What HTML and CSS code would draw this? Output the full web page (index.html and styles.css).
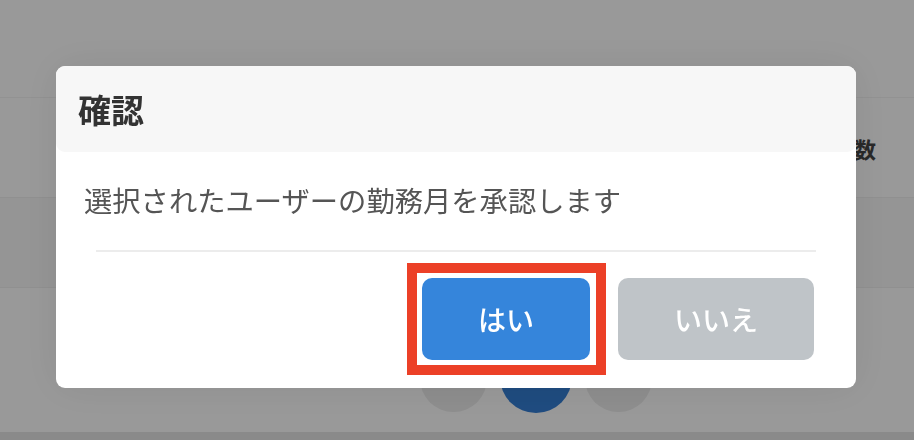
FILE: index.html
```html
<!DOCTYPE html>
<html lang="ja">
<head>
    <meta charset="UTF-8">
    <meta name="viewport" content="width=device-width, initial-scale=1.0">
    <title>確認</title>
    <link rel="stylesheet" href="styles.css">
</head>
<body>
    <div class="page">
        <div class="page-top"></div>

        <div class="list">
            <div class="list-row list-head">
                <span class="list-cell">勤務日数</span>
            </div>
            <div class="list-row list-odd"></div>
        </div>

        <div class="pager">
            <span class="pager-dot"></span>
            <span class="pager-dot current"></span>
            <span class="pager-dot"></span>
        </div>

        <div class="page-foot"></div>
    </div>

    <div class="overlay">
        <div class="modal">
            <div class="modal-head">
                <h2>確認</h2>
            </div>

            <p class="modal-body">選択されたユーザーの勤務月を承認します</p>

            <div class="modal-actions">
                <div class="highlight">
                    <button class="btn btn-yes">はい</button>
                </div>
                <button class="btn btn-no">いいえ</button>
            </div>
        </div>
    </div>
</body>
</html>
```

FILE: styles.css
```css
* {
    box-sizing: border-box;
    margin: 0;
    padding: 0;
}

body {
    font-family: "Noto Sans CJK JP", "Noto Sans", sans-serif;
    background-color: #fff;
    width: 914px;
    height: 440px;
    overflow: hidden;
}

/* page under the dialog */

.page {
    height: 440px;
    display: flex;
    flex-direction: column;
}

.page-top {
    flex-shrink: 0;
    height: 98px;
    border-bottom: 1px solid #f4f4f4;
}

.list {
    flex-shrink: 0;
}

.list-row {
    border-bottom: 1px solid #f0f0f0;
}

.list-head {
    height: 100px;
    display: flex;
    justify-content: flex-end;
    align-items: center;
    padding-right: 38px;
}

.list-cell {
    font-size: 22px;
    font-weight: bold;
    color: #444;
}

.list-odd {
    height: 90px;
    background-color: #f9f9f9;
}

.pager {
    flex: 1;
    display: flex;
    justify-content: center;
    align-items: flex-end;
    gap: 13px;
    padding-bottom: 20px;
    padding-left: 158px;
}

.pager-dot {
    width: 67px;
    height: 67px;
    border-radius: 50%;
    background-color: #ececec;
}

.pager-dot.current {
    width: 72px;
    height: 72px;
    margin-bottom: -1px;
    background-color: #347fd5;
}

.page-foot {
    flex-shrink: 0;
    height: 8px;
    background-color: #e6e6e6;
}

/* dialog */

.overlay {
    position: fixed;
    inset: 0;
    background-color: rgba(0, 0, 0, 0.4);
}

.modal {
    width: 800px;
    margin: 66px 0 0 56px;
    background: #fff;
    border-radius: 9px;
    box-shadow: 0 0 40px rgba(0, 0, 0, 0.08);
}

.modal-head {
    height: 86px;
    display: flex;
    align-items: center;
    padding: 0 22px;
    background-color: #f7f7f7;
    border-radius: 9px;
}

.modal-head h2 {
    font-size: 33px;
    font-weight: bold;
    color: #333;
    line-height: 1;
}

.modal-body {
    padding: 27px 28px 0;
    font-size: 28.3px;
    line-height: 42px;
    color: #555;
}

.modal-actions {
    margin: 29px 40px 0;
    padding: 11px 2px 13px 0;
    border-top: 2px solid #ececec;
    display: flex;
    justify-content: flex-end;
    gap: 12px;
}

.highlight {
    border: 10px solid #ec4027;
    padding: 5px 6px 5px 5px;
}

.btn {
    height: 82px;
    border: none;
    border-radius: 10px;
    font-family: inherit;
    font-size: 28px;
    font-weight: 500;
    color: #fff;
    cursor: pointer;
}

.btn-yes {
    width: 168px;
    background-color: #3585db;
    display: block;
}

.btn-no {
    width: 196px;
    margin-top: 15px;
    background-color: #bfc4c8;
}
```
